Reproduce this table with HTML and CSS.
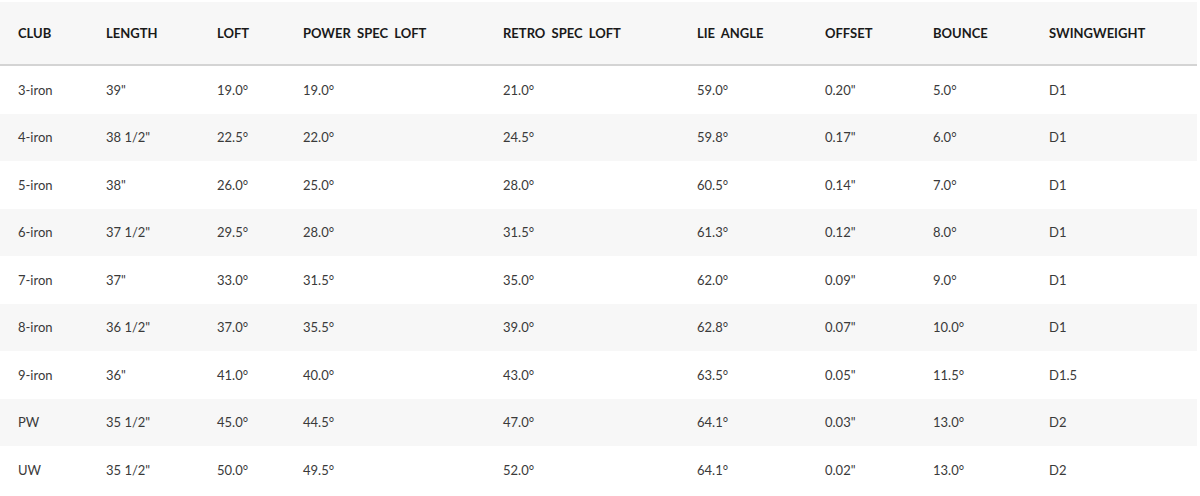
FILE: index.html
```html
<!DOCTYPE html>
<html>
<head>
<meta charset="utf-8">
<link rel="stylesheet" href="styles.css">
</head>
<body>
<table class="specs">
  <colgroup>
    <col class="c1"><col class="c2"><col class="c3"><col class="c4"><col class="c5"><col class="c6"><col class="c7"><col class="c8"><col class="c9">
  </colgroup>
  <thead>
    <tr><th>CLUB</th><th>LENGTH</th><th>LOFT</th><th>POWER SPEC LOFT</th><th>RETRO SPEC LOFT</th><th>LIE ANGLE</th><th>OFFSET</th><th>BOUNCE</th><th>SWINGWEIGHT</th></tr>
  </thead>
  <tbody>
    <tr><td>3-iron</td><td>39"</td><td>19.0°</td><td>19.0°</td><td>21.0°</td><td>59.0°</td><td>0.20"</td><td>5.0°</td><td>D1</td></tr>
    <tr><td>4-iron</td><td>38 1/2"</td><td>22.5°</td><td>22.0°</td><td>24.5°</td><td>59.8°</td><td>0.17"</td><td>6.0°</td><td>D1</td></tr>
    <tr><td>5-iron</td><td>38"</td><td>26.0°</td><td>25.0°</td><td>28.0°</td><td>60.5°</td><td>0.14"</td><td>7.0°</td><td>D1</td></tr>
    <tr><td>6-iron</td><td>37 1/2"</td><td>29.5°</td><td>28.0°</td><td>31.5°</td><td>61.3°</td><td>0.12"</td><td>8.0°</td><td>D1</td></tr>
    <tr><td>7-iron</td><td>37"</td><td>33.0°</td><td>31.5°</td><td>35.0°</td><td>62.0°</td><td>0.09"</td><td>9.0°</td><td>D1</td></tr>
    <tr><td>8-iron</td><td>36 1/2"</td><td>37.0°</td><td>35.5°</td><td>39.0°</td><td>62.8°</td><td>0.07"</td><td>10.0°</td><td>D1</td></tr>
    <tr><td>9-iron</td><td>36"</td><td>41.0°</td><td>40.0°</td><td>43.0°</td><td>63.5°</td><td>0.05"</td><td>11.5°</td><td>D1.5</td></tr>
    <tr><td>PW</td><td>35 1/2"</td><td>45.0°</td><td>44.5°</td><td>47.0°</td><td>64.1°</td><td>0.03"</td><td>13.0°</td><td>D2</td></tr>
    <tr><td>UW</td><td>35 1/2"</td><td>50.0°</td><td>49.5°</td><td>52.0°</td><td>64.1°</td><td>0.02"</td><td>13.0°</td><td>D2</td></tr>
  </tbody>
</table>
</body>
</html>
```
FILE: styles.css
```css
html, body {
  margin: 0;
  padding: 0;
  background: #ffffff;
}
body {
  padding-top: 2px;
  font-family: "Lato", "Liberation Sans", sans-serif;
}
.specs {
  width: 1197px;
  table-layout: fixed;
  border-collapse: collapse;
  border-spacing: 0;
}
.c1 { width: 88px; }
.c2 { width: 111px; }
.c3 { width: 86px; }
.c4 { width: 200px; }
.c5 { width: 194px; }
.c6 { width: 128px; }
.c7 { width: 108px; }
.c8 { width: 116px; }
.c9 { width: 166px; }
.specs th {
  background: #f7f7f7;
  height: 61px;
  padding: 0 0 0 18px;
  text-align: left;
  vertical-align: middle;
  font-size: 13px;
  font-weight: 700;
  word-spacing: 3px;
  color: #1a1a1a;
  border-bottom: 2px solid #d4d4d4;
  box-sizing: border-box;
}
.specs thead tr { height: 63px; }
.specs td {
  height: 47.5px;
  padding: 0 0 0 18px;
  font-size: 13px;
  color: #3a3a3a;
  vertical-align: middle;
  white-space: nowrap;
}
.specs tbody tr:nth-child(even) td {
  background: #f7f7f7;
}
```
